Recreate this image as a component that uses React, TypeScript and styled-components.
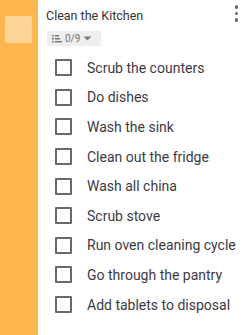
import React from "react";
import styled, { createGlobalStyle } from "styled-components";

const Global = createGlobalStyle`
  html, body { margin: 0; padding: 0; background: #fff; }
  body { font-family: Roboto, "Noto Sans", sans-serif; }
`;

const Page = styled.div`
  display: flex;
  width: 250px;
  height: 335px;
  overflow: hidden;
  background: #fff;
`;

const Sidebar = styled.div`
  width: 38px;
  flex: none;
  background: #ffb74d;
  padding: 16px 0 0 5px;
  box-sizing: border-box;
`;

const Thumb = styled.div`
  width: 27px;
  height: 27px;
  border-radius: 2px;
  background: #ffd699;
`;

const Main = styled.div`
  flex: 1;
  display: flex;
  flex-direction: column;
  padding: 6px 0 0 8px;
  position: relative;
`;

const Title = styled.div`
  font-size: 12.5px;
  color: #333;
  line-height: 20px;
`;

const Kebab = styled.div`
  position: absolute;
  right: 12px;
  top: 5px;
  display: flex;
  flex-direction: column;
  gap: 3px;
`;

const Dot = styled.span`
  width: 3.5px;
  height: 3.5px;
  border-radius: 50%;
  background: #666;
`;

const Chip = styled.div`
  margin-top: 5px;
  margin-left: 1px;
  align-self: flex-start;
  display: flex;
  align-items: center;
  gap: 3px;
  height: 15px;
  padding: 0 9px 0 5px;
  background: #eeeeee;
  font-size: 10px;
  color: #777;
`;

const List = styled.div`
  display: flex;
  flex-direction: column;
  margin-top: 7px;
  padding-left: 9px;
`;

const Row = styled.div`
  display: flex;
  align-items: center;
  height: 29.6px;
  gap: 15px;
`;

const Box = styled.span`
  width: 13px;
  height: 13px;
  border: 2px solid #6a6573;
  border-radius: 1px;
  flex: none;
`;

const Label = styled.span`
  font-size: 14px;
  color: #3d3a45;
  white-space: nowrap;
`;

const items = [
  "Scrub the counters",
  "Do dishes",
  "Wash the sink",
  "Clean out the fridge",
  "Wash all china",
  "Scrub stove",
  "Run oven cleaning cycle",
  "Go through the pantry",
  "Add tablets to disposal",
];

export default function App() {
  return (
    <Page>
      <Global />
      <Sidebar>
        <Thumb />
      </Sidebar>
      <Main>
        <Title>Clean the Kitchen</Title>
        <Kebab>
          <Dot />
          <Dot />
          <Dot />
        </Kebab>
        <Chip>
          <svg width="10" height="8" viewBox="0 0 10 8">
            <rect x="0" y="0" width="2" height="1.5" fill="#777" />
            <rect x="3" y="0" width="4" height="1.5" fill="#777" />
            <rect x="0" y="3" width="2" height="1.5" fill="#777" />
            <rect x="3" y="3" width="5" height="1.5" fill="#777" />
            <rect x="0" y="6" width="2" height="1.5" fill="#777" />
            <rect x="3" y="6" width="7" height="1.5" fill="#777" />
          </svg>
          <span>0/9</span>
          <svg width="9" height="5" viewBox="0 0 9 5">
            <path d="M0.5 0.5 L8.5 0.5 L4.5 4.5 Z" fill="#777" />
          </svg>
        </Chip>
        <List>
          {items.map((t) => (
            <Row key={t}>
              <Box />
              <Label>{t}</Label>
            </Row>
          ))}
        </List>
      </Main>
    </Page>
  );
}
